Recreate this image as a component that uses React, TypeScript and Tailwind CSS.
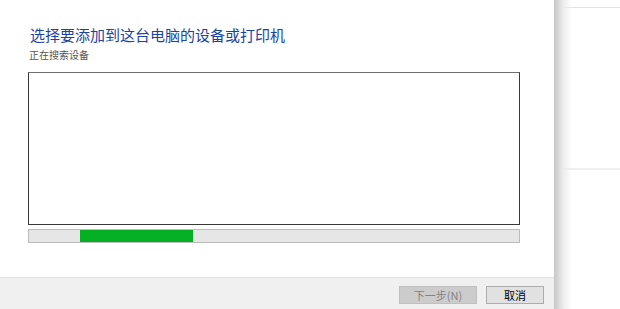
import React from "react";

export default function App() {
  const font = { fontFamily: '"Noto Sans CJK SC", "Noto Sans", sans-serif' };
  return (
    <div className="w-[620px] h-[309px] flex bg-white overflow-hidden" style={font}>
      <div className="w-[554px] h-full flex flex-col bg-white shrink-0">
        <div className="flex flex-col pl-[28px] pt-[26px]">
          <div className="pl-[2px] text-[15px] leading-[18px] text-[#1c42a4] whitespace-nowrap">
            选择要添加到这台电脑的设备或打印机
          </div>
          <div className="pl-[1px] mt-[5px] text-[10px] leading-[12px] text-[#555555] whitespace-nowrap">
            正在搜索设备
          </div>
          <div className="mt-[11px] w-[492px] h-[153px] bg-white border border-[#3a3a3a] border-t-[#6f6f6f]" />
          <div className="mt-[4px] w-[492px] h-[14px] bg-[#e6e6e6] border border-[#bcbcbc] flex">
            <div className="w-[51px]" />
            <div className="w-[113px] h-full bg-[#06b025]" />
          </div>
        </div>
        <div className="flex-1" />
        <div className="h-[32px] bg-[#f0f0f0] border-t border-[#dfdfdf] flex justify-end items-start pt-[8px] pr-[10px] gap-[9px]">
          <div className="w-[78px] h-[18px] bg-[#cccccc] border border-[#bfbfbf] flex items-center justify-center text-[11px] leading-none text-[#838383]">
            下一步(N)
          </div>
          <div className="w-[58px] h-[18px] bg-[#e1e1e1] border border-[#adadad] flex items-center justify-center text-[11px] leading-none text-black">
            取消
          </div>
        </div>
      </div>
      <div className="flex-1 relative flex flex-col bg-white">
        <div className="h-[7px]" />
        <div className="h-px bg-[#e3e3e3]" />
        <div className="h-[160px]" />
        <div className="h-[2px] bg-[#efefef]" />
        <div className="absolute inset-y-0 left-0 w-[18px] bg-gradient-to-r from-[#c6c6c6] via-[#ececec] to-transparent" />
      </div>
    </div>
  );
}
